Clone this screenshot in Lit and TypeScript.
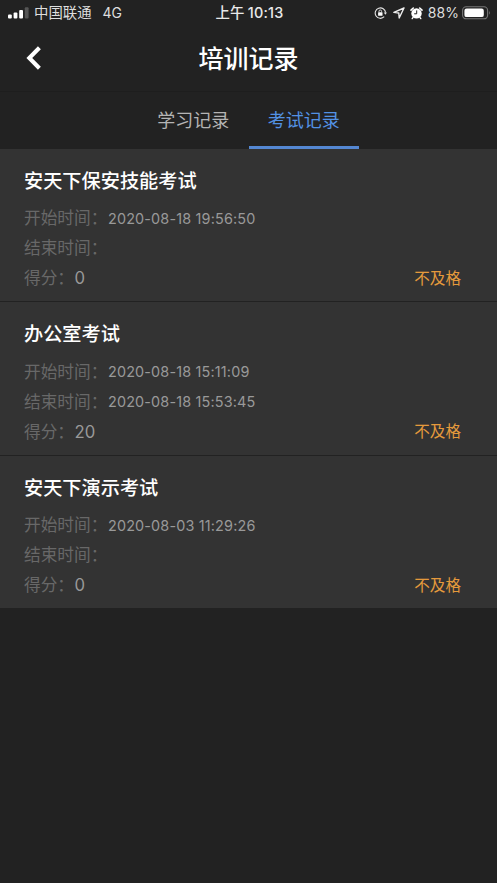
import { LitElement, html, css, nothing } from "lit";
import { customElement, property } from "lit/decorators.js";

interface Exam {
  title: string;
  start: string;
  end: string;
  score: number;
  result: string;
}

const exams: Exam[] = [
  { title: "安天下保安技能考试", start: "2020-08-18 19:56:50", end: "", score: 0, result: "不及格" },
  { title: "办公室考试", start: "2020-08-18 15:11:09", end: "2020-08-18 15:53:45", score: 20, result: "不及格" },
  { title: "安天下演示考试", start: "2020-08-03 11:29:26", end: "", score: 0, result: "不及格" },
];

@customElement("status-bar")
class StatusBar extends LitElement {
  static styles = css`
    :host {
      display: grid;
      grid-template-columns: 1fr auto 1fr;
      height: 26px;
      align-items: center;
      padding: 0 6px 0 8px;
      color: #dedede;
      font-size: 14.4px;
      line-height: 26px;
      white-space: nowrap;
    }
    .left, .right { display: flex; align-items: center; }
    .right { justify-content: flex-end; }
    .carrier { margin-left: 5px; }
    .net { margin-left: 11px; font-size: 14px; }
    .time { font-weight: 500; color: #e8e8e8; word-spacing: -1px; letter-spacing: 0.25px; }
    .lock { margin-right: 6px; }
    .nav { margin-right: 5px; }
    .alarm { margin-right: 5px; }
    .percent { font-size: 14px; letter-spacing: 0.1px; }
    .battery { margin-left: 3px; }
    svg { display: block; flex: none; }
  `;
  render() {
    return html`
      <div class="left">
        <svg width="21" height="12" viewBox="0 0 21 12" fill="#fff">
          <rect x="0" y="7.5" width="3.8" height="4" rx="1" />
          <rect x="5.6" y="5.5" width="3.8" height="6" rx="1" />
          <rect x="11.2" y="3" width="3.8" height="8.5" rx="1" />
          <rect x="16.8" y="0.3" width="3.8" height="11.2" rx="1" fill="#555" />
        </svg>
        <span class="carrier">中国联通</span><span class="net">4G</span>
      </div>
      <div class="time">上午 10:13</div>
      <div class="right">
        <svg class="lock" width="13" height="13" viewBox="0 0 13 13" fill="none" stroke="#e4e4e4" stroke-width="1.1">
          <path d="M10.2 9.7A5.2 5.2 0 1 1 11.6 5.6" />
          <path d="M9.8 5.5h3.2l-1.6 2.2z" fill="#e4e4e4" stroke="none" />
          <rect x="4.1" y="5.2" width="4.4" height="3.5" rx=".5" fill="#fff" stroke="none" />
          <path d="M5 5.4V4.3a1.3 1.3 0 0 1 2.6 0v1.1" stroke-width=".9" />
        </svg>
        <svg class="nav" width="12" height="12" viewBox="0 0 12 12" fill="none" stroke="#eee" stroke-width="1.4" stroke-linejoin="round">
          <path d="M11 1 .9 5.4l4.9.6.4 5z" />
        </svg>
        <svg class="alarm" width="13" height="13" viewBox="0 0 13 13">
          <circle cx="6.5" cy="6.4" r="5.2" fill="#fff" />
          <path d="M1 3.1 3.3 1M12 3.1 9.7 1" stroke="#fff" stroke-width="1.6" stroke-linecap="round" />
          <path d="m3.1 10.3-.9 1.3M9.9 10.3l.9 1.3" stroke="#fff" stroke-width="1.4" stroke-linecap="round" />
          <path d="M6.7 3.4v3.4H4.2" fill="none" stroke="#222" stroke-width="1" />
        </svg>
        <span class="percent">88%</span>
        <svg class="battery" width="29" height="14" viewBox="0 0 29 14">
          <rect x=".6" y=".8" width="25" height="12" rx="3.6" fill="none" stroke="#777" stroke-width="1.1" />
          <rect x="2.4" y="2.5" width="19.4" height="8.6" rx="2.2" fill="#fff" />
          <path d="M27 4.8q1.7 2 0 4z" fill="#777" />
        </svg>
      </div>
    `;
  }
}

@customElement("exam-card")
class ExamCard extends LitElement {
  @property({ attribute: false }) exam!: Exam;
  static styles = css`
    :host {
      display: block;
      box-sizing: border-box;
      height: 153.4px;
      padding: 15px 36px 0 24px;
      background: #333;
      border-bottom: 1.4px solid #222;
    }
    .title {
      font-size: 19.2px;
      line-height: 34px;
      font-weight: 500;
      color: #fff;
      margin-bottom: 5.4px;
    }
    .row {
      display: flex;
      align-items: center;
      height: 30px;
      line-height: 30px;
    }
    .label { font-size: 16.7px; color: #686868; }
    .date { margin-left: 0.5px; font-size: 14.4px; line-height: 31px; letter-spacing: 0.17px; color: #999; }
    .score { margin-left: 0.5px; font-size: 16.7px; color: #999; }
    .result { margin-left: auto; font-size: 15.6px; line-height: 32px; padding-top: 1px; color: #e59a3c; }
  `;
  render() {
    const e = this.exam;
    return html`
      <div class="title">${e.title}</div>
      <div class="row"><span class="label">开始时间：</span><span class="date">${e.start}</span></div>
      <div class="row"><span class="label">结束时间：</span>${e.end ? html`<span class="date">${e.end}</span>` : nothing}</div>
      <div class="row">
        <span class="label">得分：</span><span class="score">${e.score}</span>
        <span class="result">${e.result}</span>
      </div>
    `;
  }
}

@customElement("app-root")
class AppRoot extends LitElement {
  static styles = css`
    :host {
      display: flex;
      flex-direction: column;
      height: 100vh;
      overflow: hidden;
      background: #222;
      font-family: Inter, "Noto Sans CJK SC", sans-serif;
    }
    .header {
      display: grid;
      grid-template-columns: 1fr auto 1fr;
      align-items: center;
      height: 66px;
      padding: 0 26px;
      box-sizing: border-box;
      border-bottom: 1px solid #1e1e1e;
    }
    .header h1 {
      margin: 0;
      font-size: 25px;
      line-height: 36px;
      font-weight: 500;
      color: #fff;
    }
    .tabs {
      display: flex;
      justify-content: center;
      height: 57px;
    }
    .tab {
      width: 110.5px;
      box-sizing: border-box;
      border-bottom: 3px solid transparent;
      text-align: center;
      font-size: 18px;
      line-height: 57px;
      color: #b4b4b4;
    }
    .tab.active { color: #5391e4; border-color: #5487d2; }
  `;
  render() {
    return html`
      <status-bar></status-bar>
      <header class="header">
        <svg width="16" height="26" viewBox="0 0 16 26" fill="none" stroke="#fff" stroke-width="4.1">
          <path d="M13.4 1.8 3.3 12l10.1 10.2" />
        </svg>
        <h1>培训记录</h1>
      </header>
      <nav class="tabs">
        <div class="tab">学习记录</div>
        <div class="tab active">考试记录</div>
      </nav>
      <main>${exams.map((e) => html`<exam-card .exam=${e}></exam-card>`)}</main>
    `;
  }
}
